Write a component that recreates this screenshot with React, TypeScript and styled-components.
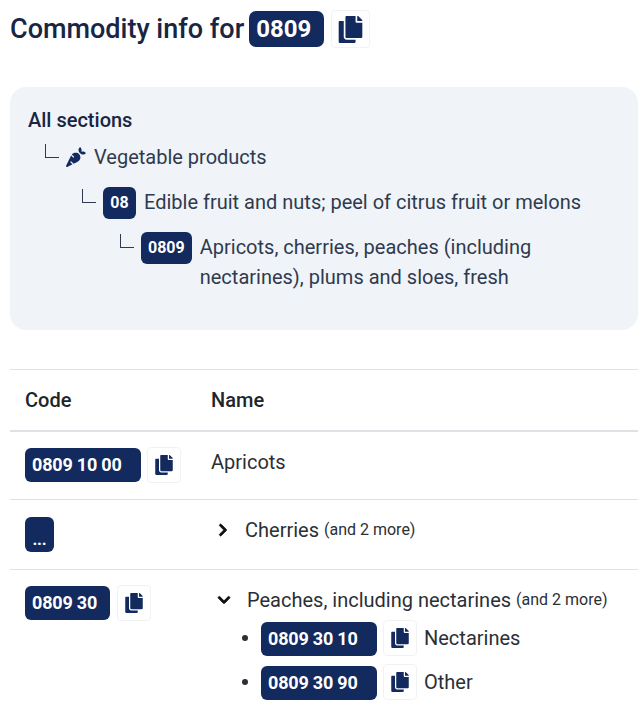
import { ReactNode } from "react";
import styled, { createGlobalStyle } from "styled-components";
import { FaCarrot, FaChevronDown, FaChevronRight, FaCopy } from "react-icons/fa";

const navy = "#132a5e";

const Global = createGlobalStyle`
  html, body { margin: 0; padding: 0; background: #fff; overflow: hidden; }
  body { font-family: Roboto, "Liberation Sans", sans-serif; color: #2b2f36; }
`;

const Page = styled.div`
  width: 628px;
  height: 721px;
  padding: 10px 2px 0 10px;
  overflow: hidden;
`;

const Heading = styled.h1`
  display: flex;
  align-items: center;
  gap: 7px;
  margin: 0 0 39px;
  height: 38px;
  font-size: 27px;
  font-weight: 500;
  color: #182544;
`;

const HeadingText = styled.span`margin-right: -2px;`;

const Code = styled.span`
  display: inline-flex;
  align-items: center;
  flex: none;
  box-sizing: border-box;
  background: ${navy};
  color: #fff;
  font-weight: 700;
  border-radius: 6px;
  height: 34px;
  font-size: 18px;
  letter-spacing: -0.2px;
  padding: 0 7px 1px;
`;

const HeadingCode = styled(Code)`
  width: 75px;
  height: 36px;
  font-size: 24px;
  letter-spacing: 0;
  border-radius: 7px;
`;

const WideCode = styled(Code)`
  width: 116px;
  margin-top: 1px;
`;

const FlatCode = styled(Code)`
  width: 85px;
  margin-top: 1px;
`;

const Dots = styled(Code)`
  width: 29px;
  height: 35px;
  margin-top: 2px;
  padding: 8px 0 0;
  justify-content: center;
  font-size: 17px;
`;

const CopyButton = styled.button<{ $large?: boolean }>`
  display: inline-flex;
  align-items: center;
  justify-content: center;
  flex: none;
  padding: 0;
  width: ${p => (p.$large ? 39 : 34)}px;
  height: ${p => (p.$large ? 38 : 36)}px;
  background: #fff;
  border: 1px solid #f1f2f4;
  border-radius: 4px;
  color: ${navy};
  font-size: ${p => (p.$large ? 27 : 20)}px;
`;

const Panel = styled.section`
  height: 243px;
  box-sizing: border-box;
  background: #f0f4f8;
  border-radius: 16px;
  padding: 21px 18px 0;
  font-size: 20px;
  line-height: 30px;
  color: #2f3a4f;
`;

const PanelTitle = styled.div`
  font-weight: 500;
  color: #182544;
  height: 26px;
  line-height: 24px;
`;

const Crumb = styled.div<{ $indent: number; $top: number }>`
  display: flex;
  align-items: flex-start;
  margin-left: ${p => p.$indent}px;
  margin-top: ${p => p.$top}px;
`;

const Elbow = styled.span`
  flex: none;
  width: 13px;
  height: 13px;
  margin: 2px 7px 0 0;
  border-left: 1px solid #2f3a4f;
  border-bottom: 1px solid #2f3a4f;
`;

const CarrotIcon = styled(FaCarrot)`
  flex: none;
  font-size: 20px;
  margin: 5px 8px 0 0;
  color: ${navy};
`;

const CrumbText = styled.span`margin-left: 8px;`;

const TreeCode = styled(Code)`
  height: 32px;
  min-width: 33px;
  justify-content: center;
  font-size: 16px;
  letter-spacing: 0;
  padding: 0 7px;
`;

const Table = styled.div`
  margin-top: 39px;
  border-top: 1px solid #dee2e6;
  font-size: 20px;
`;

const HeadRow = styled.div`
  display: grid;
  grid-template-columns: 186px 1fr;
  height: 60px;
  align-items: center;
  padding-left: 15px;
  border-bottom: 2px solid #dee2e6;
  font-weight: 500;
  color: #212529;
`;

const Row = styled.div<{ $height: number }>`
  display: grid;
  grid-template-columns: 186px 1fr;
  align-items: start;
  min-height: ${p => p.$height}px;
  padding: 15px 0 0 15px;
  box-sizing: border-box;
  border-bottom: 1px solid #dee2e6;
  &:last-child { border-bottom: 0; }
`;

const CodeCell = styled.div<{ $gap?: number }>`
  display: flex;
  align-items: flex-start;
  gap: ${p => p.$gap ?? 6}px;
`;

const NameLine = styled.div`
  display: flex;
  align-items: center;
  line-height: 30px;
`;

const Chevron = styled.span<{ $left: number; $gap: number }>`
  display: inline-flex;
  font-size: 14px;
  color: #111;
  margin: 0 ${p => p.$gap}px 0 ${p => p.$left}px;
  svg { stroke: currentColor; stroke-width: 30; }
`;

const Muted = styled.span`
  font-size: 16px;
  margin-left: 5px;
`;

const SubList = styled.ul`
  list-style: none;
  margin: 1px 0 0;
  padding: 0 0 0 31px;
`;

const SubItem = styled.li`
  display: flex;
  align-items: center;
  gap: 6px;
  height: 44px;
  &::before {
    content: "";
    width: 6px;
    height: 6px;
    margin-right: 7px;
    border-radius: 50%;
    background: #2b2f36;
  }
`;

const SubName = styled.span`margin-left: 1px;`;

function Copy({ large }: { large?: boolean }) {
  return (
    <CopyButton $large={large} aria-label="Copy">
      <FaCopy />
    </CopyButton>
  );
}

function Trail({ indent, top, children }: { indent: number; top: number; children: ReactNode }) {
  return (
    <Crumb $indent={indent} $top={top}>
      <Elbow />
      {children}
    </Crumb>
  );
}

export default function App() {
  return (
    <Page>
      <Global />
      <Heading>
        <HeadingText>Commodity info for</HeadingText>
        <HeadingCode>0809</HeadingCode>
        <Copy large />
      </Heading>

      <Panel>
        <PanelTitle>All sections</PanelTitle>
        <Trail indent={17} top={8}>
          <CarrotIcon />
          Vegetable products
        </Trail>
        <Trail indent={54} top={15}>
          <TreeCode>08</TreeCode>
          <CrumbText>Edible fruit and nuts; peel of citrus fruit or melons</CrumbText>
        </Trail>
        <Trail indent={92} top={13}>
          <TreeCode>0809</TreeCode>
          <CrumbText>Apricots, cherries, peaches (including nectarines), plums and sloes, fresh</CrumbText>
        </Trail>
      </Panel>

      <Table>
        <HeadRow>
          <span>Code</span>
          <span>Name</span>
        </HeadRow>
        <Row $height={68}>
          <CodeCell>
            <WideCode>0809 10 00</WideCode>
            <Copy />
          </CodeCell>
          <NameLine>Apricots</NameLine>
        </Row>
        <Row $height={70}>
          <CodeCell>
            <Dots>...</Dots>
          </CodeCell>
          <NameLine>
            <Chevron $left={5} $gap={15}><FaChevronRight /></Chevron>
            Cherries <Muted>(and 2 more)</Muted>
          </NameLine>
        </Row>
        <Row $height={150}>
          <CodeCell $gap={7}>
            <FlatCode>0809 30</FlatCode>
            <Copy />
          </CodeCell>
          <div>
            <NameLine>
              <Chevron $left={6} $gap={16}><FaChevronDown /></Chevron>
              Peaches, including nectarines <Muted>(and 2 more)</Muted>
            </NameLine>
            <SubList>
              <SubItem>
                <WideCode>0809 30 10</WideCode>
                <Copy />
                <SubName>Nectarines</SubName>
              </SubItem>
              <SubItem>
                <WideCode>0809 30 90</WideCode>
                <Copy />
                <SubName>Other</SubName>
              </SubItem>
            </SubList>
          </div>
        </Row>
      </Table>
    </Page>
  );
}
